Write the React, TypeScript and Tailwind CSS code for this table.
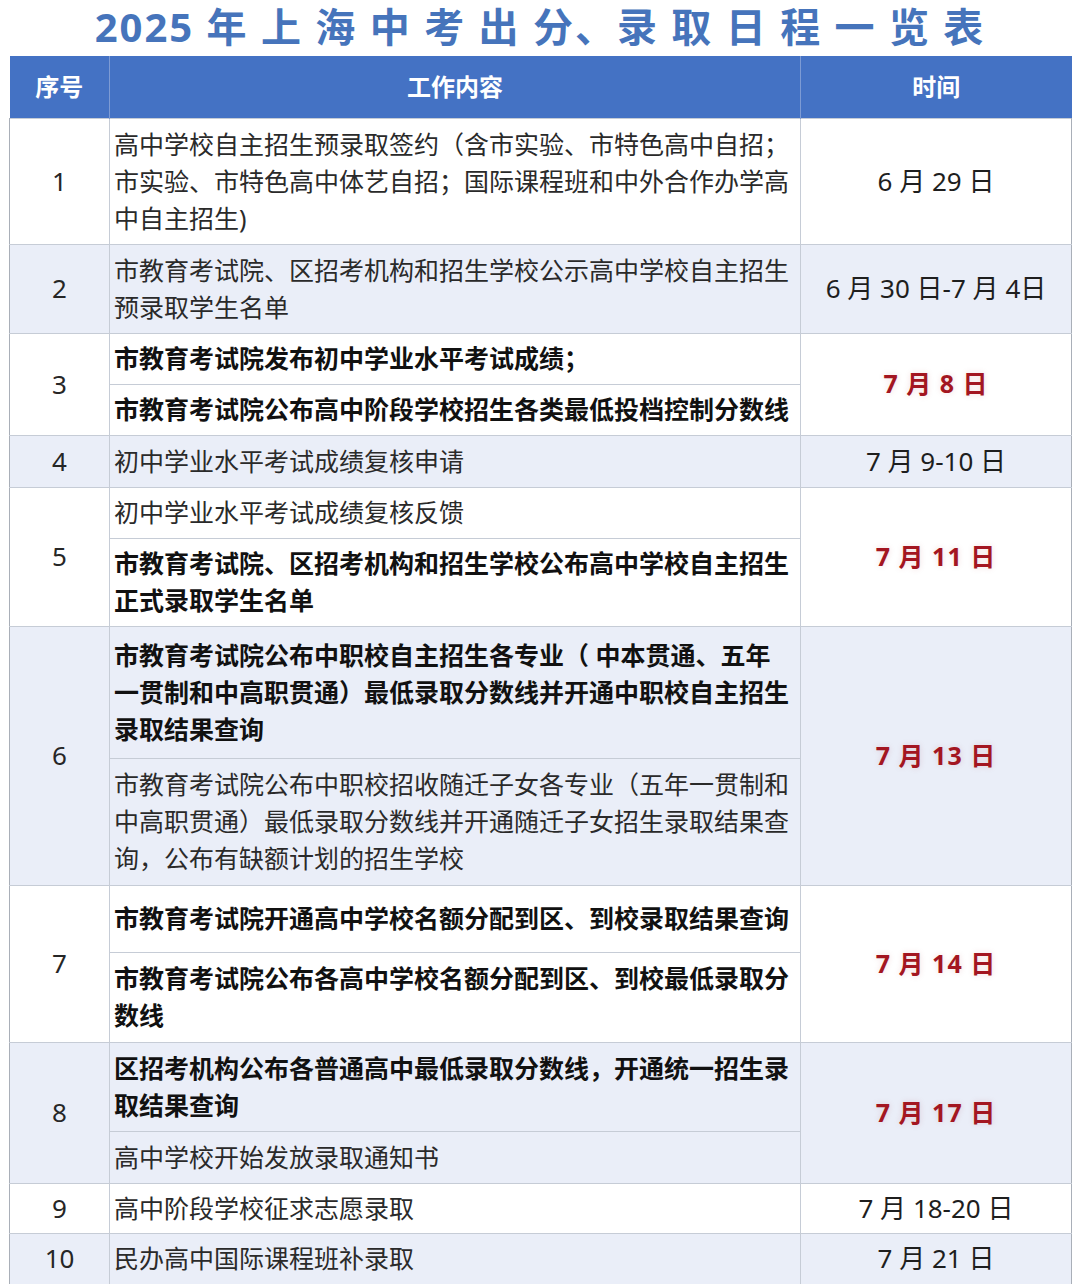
const FONT = "font-['Noto_Sans','Noto_Sans_CJK_SC',sans-serif]";

type Part = { lines: string[]; bold?: boolean; h: number };
type Row = { no: string; date: string; hot?: boolean; tint?: boolean; parts: Part[] };

const ROWS: Row[] = [
  {
    no: "1",
    date: "6 月 29 日",
    parts: [
      {
        h: 126,
        lines: [
          "高中学校自主招生预录取签约（含市实验、市特色高中自招；",
          "市实验、市特色高中体艺自招；国际课程班和中外合作办学高",
          "中自主招生)",
        ],
      },
    ],
  },
  {
    no: "2",
    date: "6 月 30 日-7 月 4日",
    tint: true,
    parts: [{ h: 89, lines: ["市教育考试院、区招考机构和招生学校公示高中学校自主招生", "预录取学生名单"] }],
  },
  {
    no: "3",
    date: "7 月 8 日",
    hot: true,
    parts: [
      { h: 51, bold: true, lines: ["市教育考试院发布初中学业水平考试成绩；"] },
      { h: 51, bold: true, lines: ["市教育考试院公布高中阶段学校招生各类最低投档控制分数线"] },
    ],
  },
  {
    no: "4",
    date: "7 月 9-10 日",
    tint: true,
    parts: [{ h: 52, lines: ["初中学业水平考试成绩复核申请"] }],
  },
  {
    no: "5",
    date: "7 月 11 日",
    hot: true,
    parts: [
      { h: 51, lines: ["初中学业水平考试成绩复核反馈"] },
      { h: 88, bold: true, lines: ["市教育考试院、区招考机构和招生学校公布高中学校自主招生", "正式录取学生名单"] },
    ],
  },
  {
    no: "6",
    date: "7 月 13 日",
    hot: true,
    tint: true,
    parts: [
      {
        h: 132,
        bold: true,
        lines: [
          "市教育考试院公布中职校自主招生各专业（ 中本贯通、五年",
          "一贯制和中高职贯通）最低录取分数线并开通中职校自主招生",
          "录取结果查询",
        ],
      },
      {
        h: 127,
        lines: [
          "市教育考试院公布中职校招收随迁子女各专业（五年一贯制和",
          "中高职贯通）最低录取分数线并开通随迁子女招生录取结果查",
          "询，公布有缺额计划的招生学校",
        ],
      },
    ],
  },
  {
    no: "7",
    date: "7 月 14 日",
    hot: true,
    parts: [
      { h: 67, bold: true, lines: ["市教育考试院开通高中学校名额分配到区、到校录取结果查询"] },
      { h: 90, bold: true, lines: ["市教育考试院公布各高中学校名额分配到区、到校最低录取分", "数线"] },
    ],
  },
  {
    no: "8",
    date: "7 月 17 日",
    hot: true,
    tint: true,
    parts: [
      { h: 89, bold: true, lines: ["区招考机构公布各普通高中最低录取分数线，开通统一招生录", "取结果查询"] },
      { h: 52, lines: ["高中学校开始发放录取通知书"] },
    ],
  },
  { no: "9", date: "7 月 18-20 日", parts: [{ h: 50, lines: ["高中阶段学校征求志愿录取"] }] },
  { no: "10", date: "7 月 21 日", tint: true, parts: [{ h: 51, lines: ["民办高中国际课程班补录取"] }] },
];

function DateText({ row }: { row: Row }) {
  if (row.hot) {
    return (
      <span className="text-[25px] font-bold tracking-[1px] text-[#a31621] [text-shadow:0_0_6px_rgba(163,22,33,0.15)]">
        {row.date}
      </span>
    );
  }
  return <span className="text-[26px] text-[#1e1e1e]">{row.date}</span>;
}

export default function App() {
  return (
    <div className={`w-[1080px] h-[1284px] overflow-hidden bg-white ${FONT}`}>
      <h1 className="h-[56px] flex items-center justify-center pb-[2px] text-[40px] font-bold leading-none tracking-[2px] text-[#4674bb]">
        2025 年 上 海 中 考 出 分、录 取 日 程 一 览 表
      </h1>
      <table className="ml-[9px] w-[1062px] table-fixed border-collapse text-[#262626]">
        <colgroup>
          <col className="w-[100px]" />
          <col className="w-[691px]" />
          <col className="w-[271px]" />
        </colgroup>
        <thead>
          <tr className="h-[62px] bg-[#4472c4] text-[24px] font-bold text-white">
            <th className="border-r border-[#7d9bd4]">序号</th>
            <th className="border-r border-[#7d9bd4]">工作内容</th>
            <th>时间</th>
          </tr>
        </thead>
        <tbody>
          {ROWS.flatMap((row) => {
            const bg = row.tint ? "bg-[#eaeef8]" : "bg-white";
            return row.parts.map((part, i) => (
              <tr key={`${row.no}-${i}`} className={bg} style={{ height: part.h }}>
                {i === 0 && (
                  <td
                    rowSpan={row.parts.length}
                    className="border border-[#c6ccd6] border-l-[#a9afb8] text-center align-middle text-[26px]"
                  >
                    {row.no}
                  </td>
                )}
                <td
                  className={`border border-[#c6ccd6] pl-[4px] pr-0 align-middle text-[25px] leading-[37px] ${
                    part.bold ? "font-bold text-[#111]" : "text-[#2a2a2a]"
                  }`}
                >
                  {part.lines.map((l) => (
                    <div key={l} className="whitespace-nowrap">
                      {l}
                    </div>
                  ))}
                </td>
                {i === 0 && (
                  <td
                    rowSpan={row.parts.length}
                    className="border border-[#c6ccd6] border-r-[#a9afb8] text-center align-middle"
                  >
                    <DateText row={row} />
                  </td>
                )}
              </tr>
            ));
          })}
        </tbody>
      </table>
    </div>
  );
}
